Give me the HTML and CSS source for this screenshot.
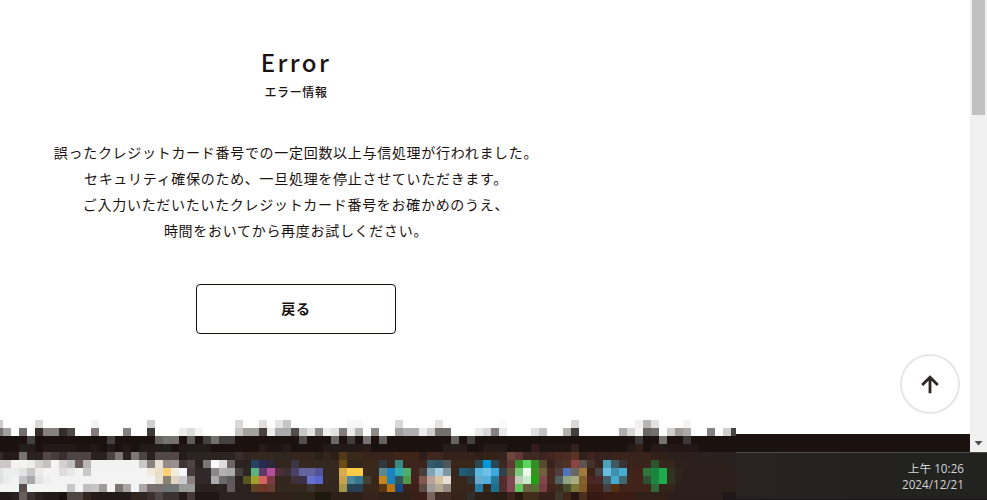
FILE: index.html
```html
<!DOCTYPE html>
<html lang="ja">
<head>
    <meta charset="UTF-8">
    <meta name="viewport" content="width=device-width, initial-scale=1.0">
    <title>Error</title>
    <link rel="stylesheet" href="styles.css">
</head>
<body>
    <div class="screen">
        <div class="window">
            <div class="page">
                <main class="content">
                    <h1>Error</h1>
                    <p class="subtitle">エラー情報</p>
                    <p class="message">
                        誤ったクレジットカード番号での一定回数以上与信処理が行われました。<br>
                        セキュリティ確保のため、一旦処理を停止させていただきます。<br>
                        ご入力いただいたいたクレジットカード番号をお確かめのうえ、<br>
                        時間をおいてから再度お試しください。
                    </p>
                    <a href="#" class="button">戻る</a>
                </main>
                <footer class="footer"></footer>
                <a href="#" class="page-top" aria-label="Top">
                    <svg width="20" height="20" viewBox="0 0 20 20">
                        <path d="M10 19.3V3.5M2.2 11L10 3.2L17.8 11" fill="none" stroke="#2b2523" stroke-width="2.8"/>
                    </svg>
                </a>
            </div>
            <div class="scrollbar">
                <div class="thumb"></div>
                <svg class="scroll-down" width="9" height="5" viewBox="0 0 9 5"><path d="M0.5 0H8.5L4.5 4.5Z" fill="#505050"/></svg>
            </div>
        </div>
        <div class="taskbar">
            <div class="clock">
                <div>上午 10:26</div>
                <div>2024/12/21</div>
            </div>
        </div>
        <svg class="mosaic" id="mosaic" width="736" height="80" viewBox="0 0 736 80" shape-rendering="crispEdges"></svg>
    </div>
    <script src="mosaic.js"></script>
</body>
</html>
```
FILE: styles.css
```css
html, body {
    height: 100%;
    margin: 0;
}
body {
    font-family: "Noto Sans CJK JP", sans-serif;
    color: #1b1210;
    background: #fff;
    overflow: hidden;
}
.screen {
    position: relative;
    display: flex;
    flex-direction: column;
    height: 500px;
}
.window {
    display: flex;
    height: 452px;
}
.page {
    position: relative;
    display: flex;
    flex-direction: column;
    flex: 1;
}
.content {
    flex: 1;
    width: 592px;
    text-align: center;
}
h1 {
    margin: 43px 0 0;
    font-size: 24px;
    font-weight: 500;
    line-height: 38px;
    letter-spacing: 2.4px;
}
.subtitle {
    margin: 2px 0 0;
    font-size: 12px;
    font-weight: 500;
    line-height: 18px;
    letter-spacing: 0.6px;
}
.message {
    margin: 38px 0 0;
    font-size: 14px;
    line-height: 26px;
    letter-spacing: 0.7px;
}
.button {
    display: block;
    box-sizing: border-box;
    width: 200px;
    height: 50px;
    margin: 41px auto 0;
    border: 1px solid #1b1210;
    border-radius: 4px;
    color: #1b1210;
    font-size: 14px;
    font-weight: 700;
    line-height: 46px;
    letter-spacing: 0.7px;
    text-decoration: none;
}
.footer {
    height: 18px;
    background: #1b1210;
}
.page-top {
    position: absolute;
    right: 10px;
    bottom: 38px;
    display: flex;
    align-items: center;
    justify-content: center;
    box-sizing: border-box;
    width: 60px;
    height: 60px;
    border: 2px solid #e8e7e7;
    border-radius: 50%;
    background: #fff;
}
.scrollbar {
    display: flex;
    flex-direction: column;
    align-items: center;
    justify-content: space-between;
    width: 17px;
    background: #f0f0f0;
}
.thumb {
    width: 13px;
    height: 115px;
    background: #c1c1c1;
}
.scroll-down {
    margin-bottom: 6px;
}
.taskbar {
    display: flex;
    justify-content: flex-end;
    box-sizing: border-box;
    height: 48px;
    border-top: 1px solid #4b4b4a;
    border-bottom: 1px solid #1a1518;
    background: linear-gradient(to right, #292221 736px, #222221 900px);
}
.clock {
    padding: 7px 23px 0 0;
    color: #d4d4d4;
    font-family: "Open Sans", "Noto Sans CJK TC", sans-serif;
    font-size: 11.7px;
    line-height: 16px;
    text-align: right;
}
.mosaic {
    position: absolute;
    left: 0;
    bottom: 0;
}
```
FILE: mosaic.js
```js
// each entry is "first column, colour"; a colour runs until the next entry
const rows = [
    '0 cdcdcd,1 fff,5 d9d9d9,6 fff,12 f3f3f3,13 fff,19 d0d0d0,20 fff,30 d9d9d9,31 fff,33 dfdfdf,34 fff,35 e4e4e4,36 c6c6c6,37 fff,44 f7f7f7,46 fff,50 d9d9d9,51 fff,55 e2e2e2,56 fff,63 fafafa,64 fff,72 d9d9d9,73 fff,80 f0f0f0,81 b8b6b6,82 e2e2e2,83 fff,86 f3f3f3,87 fff',
    '0 777272,1 a5a0a0,2 fff,3 757070,4 fff,5 332e2d,6 868181,8 332e2d,9 4d4746,10 fff,12 837d7d,13 fff,16 868181,17 fff,19 3c3837,20 fff,23 ebebeb,24 dcdcdc,25 f3f3f3,26 fff,30 c7c6c6,31 a5a0a0,33 484140,34 ececec,35 ababab,37 524b4b,38 c7c6c6,39 e2e2e2,40 8f8a8a,41 efefef,42 e2e2e2,43 837d7d,44 eaeaea,45 b3b3b3,46 fff,47 8f8a8a,48 fff,50 a5a0a0,51 b0b0b0,53 ececec,54 cfcccc,55 757070,57 fff,60 e9e9e9,61 d9d6d7,62 868080,63 e9e9e9,64 fff,67 e0e0e0,68 c5c4c4,69 fff,71 b3b0b0,72 42403d,73 fff,78 b0acad,79 d8d5d6,80 f5f5f5,81 6c6767,82 757070,83 fff,84 cfcdcd,85 9e9b9a,86 aeaaaa,87 fff,89 868181,90 fff,91 d0cece,92 484442',
    '0 1b1210,4 454140,5 1b1210,14 454140,15 1b1210,20 676361,21 757271,23 1b1210,24 5f5b5b,25 1b1210,26 454140,27 757070,28 454140,30 1b1210,38 524e4d,39 1b1210,42 6c6868,43 1b1210,44 403c3a,45 1b1210,46 777271,47 1b1210,48 656160,49 1b1210,57 676361,58 1b1210,59 454140,60 1b1210,80 3c3837,81 1b1210,83 757271,84 1b1210,86 3c3837,87 1b1210',
    '0 1b1210,3 221e1b,5 1b1210,6 231918,10 1e1513,12 231918,13 1b1210,14 231918,15 1b1210,16 231918,17 1b1210,18 221c19,21 22201e,22 1b1210,23 231918,24 221c19,27 1b1210,33 251c19,34 1d1513,36 251c19,37 1b1210,41 231918,46 271c18,47 1b1210,56 261c1a,58 271c19,59 1b1210,61 241a18,64 1b1210,67 301d1b,68 1f1513,72 302020,73 1b1210,79 241a17,80 302018,81 1b1210,82 261a16,84 221716,88 1b1210',
    '0 332a29,1 251b1a,3 787372,4 2a2120,6 544846,7 483c3b,8 3a2e2e,9 4d4444,11 4f4443,12 2a2020,14 4a4241,15 7d7775,16 2a2120,17 7d7775,18 4d4444,19 2a201f,20 534847,23 251b1a,24 2c2421,30 382f2d,31 30251f,32 33271f,35 31251f,37 33251c,40 2a2017,41 33251c,42 2a2017,43 4f3a18,44 3a2818,46 38231a,50 3f2418,53 2e1d1b,54 3d271e,56 33211a,60 2d1f17,61 352217,63 33251e,64 6b463c,65 613737,66 3e2822,68 3b2320,69 44261e,70 492a21,71 4b2c25,72 5b3025,73 30201b,74 41231d,75 35211d,77 3a231a,79 37231a,82 302018,84 2c201d,86 2b1e1d,88 2b2121,90 292020',
    '0 ccc8ca,2 f4f3f2,4 ededeb,5 d4d2d1,6 c5c2c1,7 f4f4f4,8 d4d2d1,9 c2c0bf,10 6a5d5c,11 b9b7b6,12 f3f2f3,18 ccc8ca,19 898380,20 e9e1d3,21 938a8a,22 978f90,23 3e3335,24 4e4446,25 2b2220,26 7c7575,27 fafafa,28 dddddd,29 6b6665,30 2b2220,32 27415e,33 262b52,34 2c283b,35 33261e,37 3c3445,38 33271e,43 6b4a15,44 33261d,46 3b271a,48 2f3740,49 39261c,50 388980,51 3c231b,54 335b69,55 2e5362,56 4d575b,57 39261b,60 2b4853,61 0096db,62 2a4652,63 3b2820,64 633737,65 349527,66 5bd55a,67 348d24,68 56492e,69 38231c,70 452e29,71 513025,72 8a4540,73 5e5152,74 43312b,75 38221b,76 4aa2bd,77 3e5961,78 393334,79 39231a,82 2e532f,83 36251a,85 2c201d,92 292020',
    '0 e1e1e1,1 eceeee,3 e1e4e2,4 c7c7c7,5 eaecec,6 f3f3f3,8 ddddde,9 e7e7e9,10 f3f3f3,11 c9c9c9,12 f3f3f3,19 f0eadc,20 ecdec4,21 fdd076,22 f1ecdc,23 f4f6f8,24 473b3b,25 30282a,27 8a8786,28 b2b0b0,29 aaaaaa,30 473d40,31 302523,32 5bb47f,33 62386a,34 b34f9d,35 512d39,36 3a3032,37 494266,38 62629f,40 51529a,41 33281e,43 d8ac4c,44 fecb45,46 39281d,48 5b8791,49 1b83bf,50 30a9ae,51 4cad6c,52 41231b,53 473e3b,54 7fa5b5,55 a9cee0,56 8197a0,57 39261b,58 1f5c76,59 275265,60 5ab7e2,61 6fc0e7,62 3ca9dc,63 334248,64 63543d,65 78c978,66 edf9ee,67 37921f,68 71603d,69 492a21,70 4f3e40,71 4f74b9,72 69665f,73 a17a3e,74 3e2115,75 444447,76 64bfe0,77 3f8faa,78 45add0,79 41231a,81 2e763b,82 19843f,83 1faa4f,84 2f3422,85 30251c,86 2c201d',
    '0 e1e1e1,1 ebecec,2 f3f3f3,3 c5c5c7,4 a9a9ab,5 e4e4e4,6 efefed,7 f3f3f3,20 e7dfcf,21 8b8371,22 dfd5c1,23 cccbcf,24 87807f,25 30282a,27 acabab,28 6b6b6a,29 5c5959,30 2b2220,31 575520,32 a0a12a,33 d8635f,34 7c3a47,35 33261d,37 40303a,38 3a3047,39 6870ce,40 5964cd,41 33281e,43 c8a24a,44 4d879b,45 367790,46 44402e,47 39261b,48 c98618,49 1c82bf,50 30565a,51 51974a,52 41231b,53 7e594e,54 b8a19b,55 d4c3a1,56 e7dfd4,57 39261b,59 2d363b,60 6ba9cb,61 4fb0de,62 267798,63 512d2c,64 81454f,65 c1cdb7,66 c7edca,67 20a215,68 80464c,69 492a21,70 4f605e,71 8ea381,72 acab7d,73 84602c,74 4b2320,75 49282a,76 3f616c,77 43abcd,78 426872,79 41231a,81 2e5130,82 1b8640,83 1faa4f,84 30341f,85 2c231b,86 2c201d',
    '0 f4f4f4,3 58504f,4 f4f4f4,9 c7c7c7,10 f4f4f4,11 bfbfbf,12 c5c5c5,13 9e9b9a,14 f4f4f4,15 7c7473,16 aba5a3,17 f4f4f4,18 aba5a5,19 787170,21 717676,23 9a9a99,25 2b2220,29 655a5b,30 2b2220,32 5c4321,33 6f3525,34 693d31,35 33261d,39 3b3430,40 33261d,43 a6964a,44 254153,46 39261b,48 583511,49 bc760b,50 154a87,51 3c2018,53 5d4a43,54 9f9b99,55 b2a896,56 958a85,57 39261b,60 247da4,61 39261b,62 16708f,63 512d2c,64 814550,65 61c75a,66 6c6040,67 527131,68 783e43,69 43251d,70 3b2c20,71 464c29,72 7a7638,73 805b27,74 401f16,76 43403f,77 54300f,78 41231a,82 2e6937,83 33241b,85 2c201d',
    '0 231919,2 2b2120,3 685f5d,4 3c3131,5 2b2120,6 231919,8 181110,9 4f4643,11 30251f,12 231919,17 30251f,19 3c2f2e,20 4f4544,21 3c3131,23 231919,24 443938,25 211617,28 2b2120,33 2f201a,37 2b2218,40 1e180f,42 2c2018,46 36231b,48 2d2118,52 3a1f17,54 78645d,55 412c23,57 36231a,59 312d29,60 2d2018,62 281d14,64 3e231d,65 28190f,66 412d1a,68 37201a,70 3d3525,71 412617,72 261510,73 4b2e1b,74 351811,76 3c1b14,80 302018,84 2b1f1c,91 1f1718'
];

const cell = 8;
const columns = 93;
const svg = document.getElementById('mosaic');

rows.forEach((row, y) => {
    const runs = row.split(',').map((run) => run.split(' '));
    runs.forEach(([start, color], i) => {
        const end = i + 1 < runs.length ? Number(runs[i + 1][0]) : columns;
        const rect = document.createElementNS('http://www.w3.org/2000/svg', 'rect');
        rect.setAttribute('x', start * cell - 5);
        rect.setAttribute('y', y * cell);
        rect.setAttribute('width', (end - start) * cell);
        rect.setAttribute('height', cell);
        rect.setAttribute('fill', '#' + color);
        svg.appendChild(rect);
    });
});
```
